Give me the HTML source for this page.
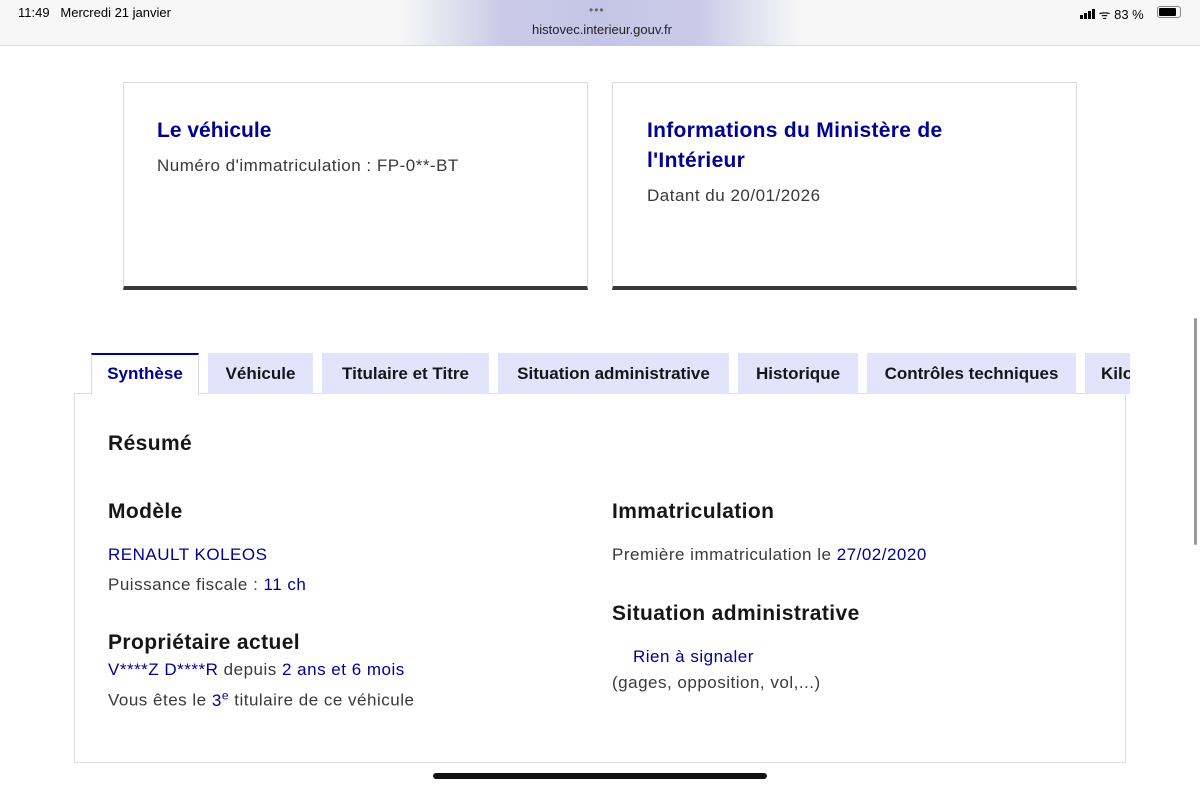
<!DOCTYPE html>
<html><head><meta charset="utf-8"><style>
*{margin:0;padding:0;box-sizing:border-box}
body{width:1200px;height:788px;background:#fff;font-family:"Liberation Sans",sans-serif;position:relative;overflow:hidden;color:#3a3a3a}
.a{position:absolute;white-space:nowrap}
.top{position:absolute;left:0;top:0;width:1200px;height:46px;background:#f7f7f7;border-bottom:1px solid #dcdcdc}
.blob{position:absolute;left:400px;top:0;width:400px;height:46px;background:linear-gradient(90deg,rgba(247,247,247,0) 0%,#cbcbe8 25%,#c4c4e6 50%,#cbcbe8 75%,rgba(247,247,247,0) 100%)}
.card{position:absolute;top:82px;height:208px;border:1px solid #ddd;border-bottom:4px solid #3a3a3a;background:#fff}
.bl{color:#000091}
h3{font-size:21px;font-weight:bold;color:#000091;line-height:30px}
.tab{position:absolute;top:353px;height:41px;background:#e3e3fd;font-size:17px;font-weight:bold;color:#161616;line-height:41px;text-align:center}
.t{font-size:17px;line-height:30px;letter-spacing:0.5px}
.h{font-size:21px;font-weight:bold;color:#161616;letter-spacing:0.4px}
</style></head><body>
<div class="top"><div class="blob"></div></div>
<div class="a" style="left:18px;top:5px;font-size:13px;color:#000">11:49&nbsp;&nbsp; Mercredi 21 janvier</div>
<div class="a" style="left:589px;top:3px;font-size:12px;color:#666;letter-spacing:1px">•••</div>
<div class="a" style="left:532px;top:22px;font-size:13px;color:#222">histovec.interieur.gouv.fr</div>
<div class="a" style="left:1080px;top:5px;font-size:13px;color:#000">
<span style="display:inline-block;width:3px;height:4px;background:#000"></span><span style="display:inline-block;width:3px;height:6px;background:#000;margin-left:1px"></span><span style="display:inline-block;width:3px;height:8px;background:#000;margin-left:1px"></span><span style="display:inline-block;width:3px;height:10px;background:#000;margin-left:1px"></span> ᯤ 83 %</div>
<div class="a" style="left:1157px;top:6px;width:24px;height:12px;border:1px solid #888;border-radius:3px;padding:1px"><div style="width:17px;height:8px;background:#000;border-radius:1px"></div></div>

<div class="card" style="left:123px;width:465px">
<div class="a" style="left:33px;top:33px"><h3>Le véhicule</h3></div>
<div class="a t" style="left:33px;top:68px">Numéro d'immatriculation : FP-0**-BT</div>
</div>
<div class="card" style="left:612px;width:465px">
<div class="a" style="left:34px;top:33px"><h3 style="letter-spacing:0.3px">Informations du Ministère de<br>l'Intérieur</h3></div>
<div class="a t" style="left:34px;top:98px">Datant du 20/01/2026</div>
</div>

<div class="a" style="left:74px;top:393px;width:1052px;height:370px;border:1px solid #ddd"></div>
<div class="tab" style="left:91px;width:108px;background:#fff;border:1px solid #ddd;border-top:2px solid #000091;border-bottom:none;color:#000091;height:42px;line-height:38px">Synthèse</div>
<div class="tab" style="left:208px;width:105px">Véhicule</div>
<div class="tab" style="left:322px;width:167px">Titulaire et Titre</div>
<div class="tab" style="left:498px;width:231px">Situation administrative</div>
<div class="tab" style="left:738px;width:120px">Historique</div>
<div class="tab" style="left:867px;width:209px">Contrôles techniques</div>
<div class="tab" style="left:1085px;width:45px;text-align:left;padding-left:16px;overflow:hidden">Kilo</div>

<div class="a h" style="left:108px;top:432px">Résumé</div>
<div class="a h" style="left:108px;top:500px">Modèle</div>
<div class="a t bl" style="left:108px;top:540px">RENAULT KOLEOS</div>
<div class="a t" style="left:108px;top:570px">Puissance fiscale : <span class="bl">11 ch</span></div>
<div class="a h" style="left:108px;top:631px">Propriétaire actuel</div>
<div class="a t" style="left:108px;top:655px"><span class="bl">V****Z D****R</span> depuis <span class="bl">2 ans et 6 mois</span></div>
<div class="a t" style="left:108px;top:680px">Vous êtes le <span class="bl">3<sup style="font-size:12px">e</sup></span> titulaire de ce véhicule</div>

<div class="a h" style="left:612px;top:500px">Immatriculation</div>
<div class="a t" style="left:612px;top:540px">Première immatriculation le <span class="bl">27/02/2020</span></div>
<div class="a h" style="left:612px;top:602px">Situation administrative</div>
<div class="a t bl" style="left:633px;top:642px">Rien à signaler</div>
<div class="a t" style="left:612px;top:668px">(gages, opposition, vol,...)</div>

<div class="a" style="left:1194px;top:318px;width:3px;height:227px;background:#9a9a9a;border-radius:2px"></div>
<div class="a" style="left:433px;top:773px;width:334px;height:6px;background:#111;border-radius:3px"></div>
</body></html>
